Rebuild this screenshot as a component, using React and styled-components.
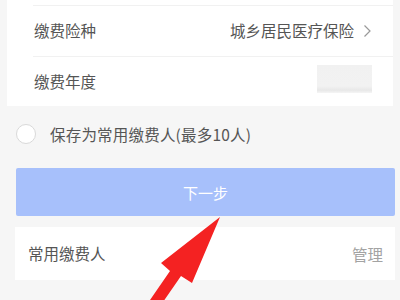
import React from "react";
import styled, { createGlobalStyle } from "styled-components";

const Global = createGlobalStyle`
  html, body { margin: 0; padding: 0; background: #f6f6f6; }
  body { font-family: "Noto Sans CJK SC", "Noto Sans", sans-serif; overflow: hidden; }
`;

const Page = styled.div`
  position: relative;
  width: 400px;
  height: 300px;
  overflow: hidden;
  background: #f6f6f6;
`;

const Card = styled.div`
  background: #fff;
  margin: ${(p) => p.$margin};
`;

const PrevRow = styled.div`
  height: 5px;
`;

const Row = styled.div`
  height: ${(p) => p.$h}px;
  display: flex;
  align-items: center;
  justify-content: space-between;
  padding: 0 21px 0 27px;
  border-top: ${(p) => (p.$divider ? "1px solid #f1f1f1" : "none")};
  margin-left: ${(p) => (p.$divider ? "26px" : "0")};
  padding-left: ${(p) => (p.$divider ? "1px" : "27px")};
`;

const Label = styled.span`
  font-size: 15.5px;
  color: #555;
  line-height: 1;
`;

const Value = styled.span`
  display: flex;
  align-items: center;
  gap: 9px;
  font-size: 15.5px;
  color: #555;
  line-height: 1;
`;

const Blur = styled.div`
  width: 55px;
  height: 28px;
  margin-top: -6px;
  background: linear-gradient(#f1f1f1 0%, #f2f2f2 75%, #e8e8e8 90%, #f5f5f5 100%);
  filter: blur(0.6px);
`;

const CheckRow = styled.label`
  height: 56px;
  display: flex;
  align-items: center;
  gap: 14px;
  padding-left: 16px;
  font-size: 15.5px;
  color: #555;
  letter-spacing: 0.2px;
`;

const Circle = styled.span`
  width: 18px;
  height: 18px;
  border-radius: 50%;
  border: 1px solid #d9d9d9;
  background: #fff;
`;

const Button = styled.button`
  display: block;
  width: 379px;
  height: 48px;
  margin: 6px 0 0 16px;
  border: none;
  border-radius: 2px;
  background: #a7c0fb;
  color: #fff;
  font-family: inherit;
  font-size: 15px;
`;

const ManageLink = styled.span`
  font-size: 15.5px;
  color: #a3a3a3;
`;

const Chevron = () => (
  <svg width="9" height="14" viewBox="0 0 9 14">
    <path d="M1.5 1.5 L7 7 L1.5 12.5" fill="none" stroke="#999" strokeWidth="1.2" />
  </svg>
);

const ArrowOverlay = styled.svg`
  position: absolute;
  left: 0;
  top: 0;
  pointer-events: none;
`;

export default function App() {
  return (
    <Page>
      <Global />
      <Card $margin="0 7px 0 7px">
        <PrevRow />
        <Row $h={50} $divider>
          <Label>缴费险种</Label>
          <Value>
            城乡居民医疗保险
            <Chevron />
          </Value>
        </Row>
        <Row $h={49} $divider>
          <Label>缴费年度</Label>
          <Blur />
        </Row>
      </Card>
      <CheckRow>
        <Circle />
        保存为常用缴费人(最多10人)
      </CheckRow>
      <Button>下一步</Button>
      <Card $margin="11px 5px 0 15px">
        <Row $h={53} style={{ paddingLeft: 13, paddingRight: 12 }}>
          <Label>常用缴费人</Label>
          <ManageLink>管理</ManageLink>
        </Row>
      </Card>
      <ArrowOverlay width="400" height="300" viewBox="0 0 400 300">
        <polygon
          points="220,217 192,283 181,276 163,302 150,300 170,271 161,263"
          fill="#f42222"
        />
      </ArrowOverlay>
    </Page>
  );
}
